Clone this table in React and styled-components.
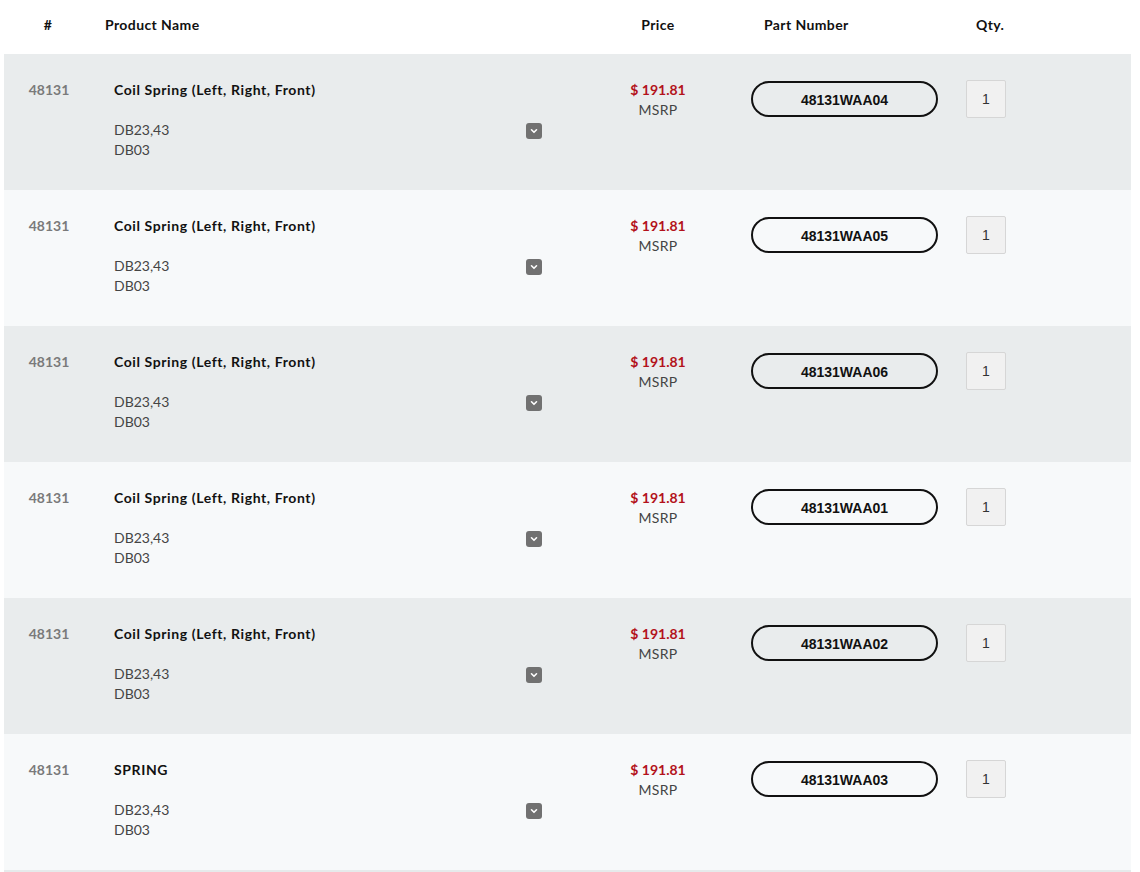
import React from 'react';
import styled, { createGlobalStyle } from 'styled-components';

const GlobalStyle = createGlobalStyle`
  body {
    margin: 0;
    background: #fff;
    font-family: Lato, "Open Sans", sans-serif;
    color: #1a1a1a;
  }
`;

const Table = styled.div`
  margin: 0 9px 0 4px;
  border-bottom: 2px solid #e6eaeb;
`;

const Grid = styled.div`
  display: grid;
  grid-template-columns: 88px 508px 116px 236px 1fr;
`;

const HeadRow = styled(Grid)`
  height: 54px;
  box-sizing: border-box;
  padding-bottom: 6px;
  align-items: center;
  background: #fff;
  font-weight: 700;
  font-size: 14px;
  letter-spacing: 0.4px;
  color: #111;
`;

const HeadCell = styled.div`
  text-align: ${({ align }) => align || 'left'};
  padding-left: ${({ pl }) => pl || '0'};
`;

const Row = styled(Grid)`
  height: 136px;
  box-sizing: border-box;
  padding-top: 26px;
  background: ${({ shade }) => (shade ? '#e9eced' : '#f7f9fa')};
  align-items: start;
`;

const Num = styled.div`
  text-align: center;
  font-size: 14px;
  line-height: 20px;
  font-weight: 700;
  color: #7a7a7a;
  padding-left: 2px;
`;

const Product = styled.div`
  padding-left: 22px;
  padding-right: 58px;
`;

const Name = styled.div`
  font-size: 14px;
  line-height: 20px;
  font-weight: 700;
  letter-spacing: 0.6px;
  color: #111;
`;

const Models = styled.div`
  display: flex;
  justify-content: space-between;
  align-items: flex-start;
  margin-top: 20px;
`;

const ModelLines = styled.div`
  font-size: 14px;
  line-height: 20px;
  color: #444;
`;

const Toggle = styled.span`
  display: flex;
  align-items: center;
  justify-content: center;
  width: 16px;
  height: 16px;
  margin-top: 3px;
  border-radius: 3px;
  background: #717171;
`;

const Price = styled.div`
  text-align: center;
  font-size: 14px;
  line-height: 20px;
`;

const Amount = styled.div`
  color: #b3121b;
  font-weight: 700;
`;

const Msrp = styled.div`
  color: #444;
  letter-spacing: 0.3px;
`;

const PartCell = styled.div`
  padding-left: 35px;
  padding-top: 1px;
`;

const Pill = styled.div`
  width: 187px;
  height: 36px;
  box-sizing: border-box;
  border: 2px solid #111;
  border-radius: 18px;
  display: flex;
  align-items: center;
  justify-content: center;
  padding-top: 1px;
  font-family: "Liberation Sans", Arial, sans-serif;
  font-weight: 700;
  font-size: 14px;
  color: #111;
`;

const QtyCell = styled.div`
  padding-left: 14px;
`;

const QtyBox = styled.div`
  width: 40px;
  height: 38px;
  box-sizing: border-box;
  border: 1px solid #d6d6d6;
  border-radius: 2px;
  background: #f1f1f1;
  display: flex;
  align-items: center;
  justify-content: center;
  font-family: "Liberation Sans", Arial, sans-serif;
  font-size: 14px;
  color: #333;
`;

const parts = [
  { name: 'Coil Spring (Left, Right, Front)', part: '48131WAA04' },
  { name: 'Coil Spring (Left, Right, Front)', part: '48131WAA05' },
  { name: 'Coil Spring (Left, Right, Front)', part: '48131WAA06' },
  { name: 'Coil Spring (Left, Right, Front)', part: '48131WAA01' },
  { name: 'Coil Spring (Left, Right, Front)', part: '48131WAA02' },
  { name: 'SPRING', part: '48131WAA03' },
];

const Chevron = () => (
  <svg width="10" height="10" viewBox="0 0 10 10">
    <path d="M2.5 3.8 L5 6.3 L7.5 3.8" fill="none" stroke="#fff" strokeWidth="1.6" strokeLinecap="round" strokeLinejoin="round" />
  </svg>
);

export default function App() {
  return (
    <>
      <GlobalStyle />
      <Table>
        <HeadRow>
          <HeadCell align="center">#</HeadCell>
          <HeadCell pl="13px">Product Name</HeadCell>
          <HeadCell align="center">Price</HeadCell>
          <HeadCell pl="48px">Part Number</HeadCell>
          <HeadCell pl="24px">Qty.</HeadCell>
        </HeadRow>
        {parts.map((p, i) => (
          <Row key={p.part} shade={i % 2 === 0}>
            <Num>48131</Num>
            <Product>
              <Name>{p.name}</Name>
              <Models>
                <ModelLines>
                  <div>DB23,43</div>
                  <div>DB03</div>
                </ModelLines>
                <Toggle><Chevron /></Toggle>
              </Models>
            </Product>
            <Price>
              <Amount>$ 191.81</Amount>
              <Msrp>MSRP</Msrp>
            </Price>
            <PartCell>
              <Pill>{p.part}</Pill>
            </PartCell>
            <QtyCell>
              <QtyBox>1</QtyBox>
            </QtyCell>
          </Row>
        ))}
      </Table>
    </>
  );
}
